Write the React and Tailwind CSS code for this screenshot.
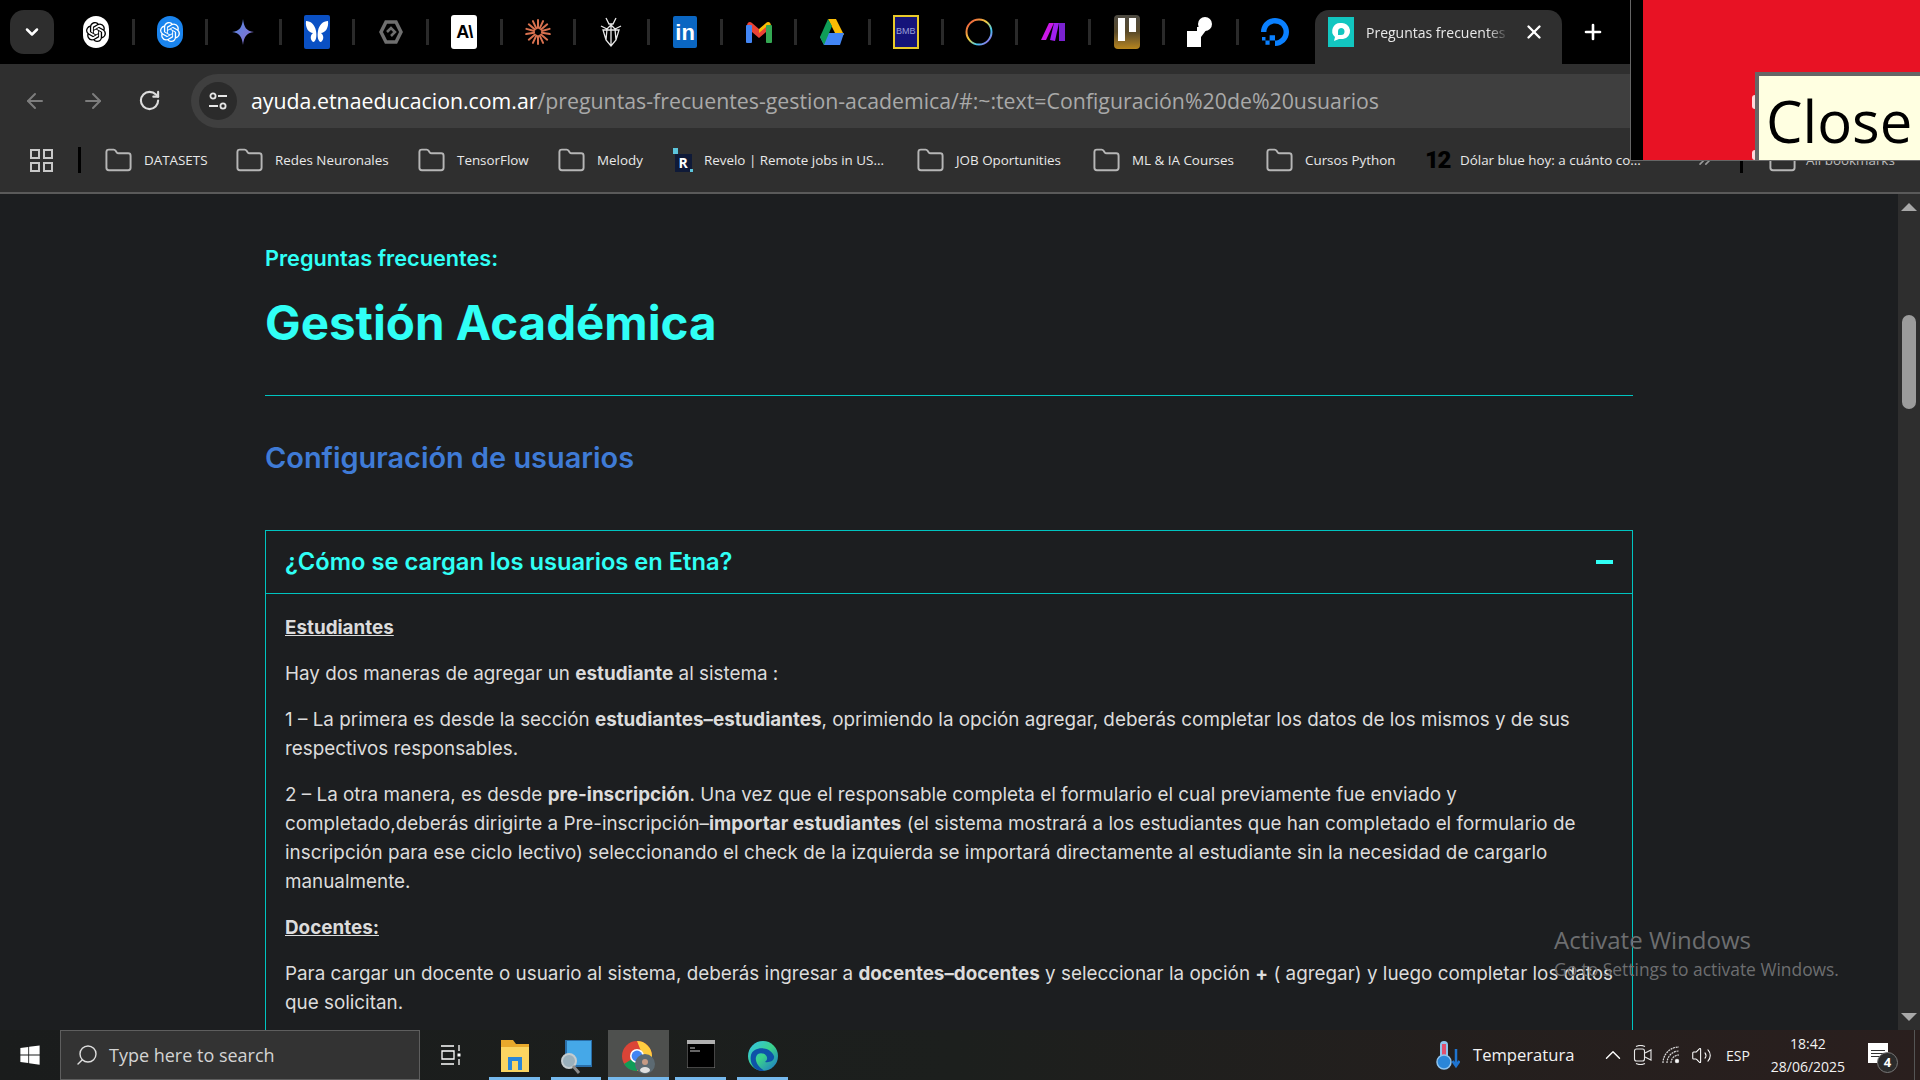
import React from 'react';
import { ArrowLeft, ArrowRight, RotateCw, Folder, Plus, X, ChevronDown, ChevronUp, Search, ZoomOut, ChevronsRight, Volume2 } from 'lucide-react';
import { SiOpenai, SiDigitalocean } from 'react-icons/si';
import { FaWindows } from 'react-icons/fa';

const Claude = () => (
  <svg width="26" height="26" viewBox="0 0 26 26" stroke="#d9714f" strokeWidth="2" strokeLinecap="round">
    {[0, 25, 50, 75, 100, 130, 155, 180, 205, 230, 260, 285, 310, 335].map((a) => (
      <line key={a} x1="13" y1="9" x2="13" y2="1" transform={`rotate(${a} 13 13)`} />
    ))}
  </svg>
);

const tabIcons = [
  <div className="w-[26px] h-[32px] rounded-full bg-white flex items-center justify-center text-black"><SiOpenai size={20} /></div>,
  <div className="w-[26px] h-[32px] rounded-full bg-[#1a84ee] flex items-center justify-center text-white"><SiOpenai size={20} /></div>,
  <svg width="24" height="28" viewBox="0 0 24 28"><defs><linearGradient id="gem" x1="0" y1="0" x2="1" y2="1"><stop offset="0" stopColor="#4f8ae8" /><stop offset="1" stopColor="#8f6cc8" /></linearGradient></defs><path d="M12 1C13 9 15 13 23 14 15 15 13 19 12 27 11 19 9 15 1 14 9 13 11 9 12 1Z" fill="url(#gem)" /></svg>,
  <svg width="26" height="34" viewBox="0 0 26 34"><rect width="26" height="34" rx="2" fill="#0a50c4" /><path d="M12 16C11 10 7 6 2 6 1 13 5 18 9 18 6 20 6 25 9 27 12 27 13 21 12 16ZM14 16C15 10 19 6 24 6 25 13 21 18 17 18 20 20 20 25 17 27 14 27 13 21 14 16Z" fill="#fff" /></svg>,
  <svg width="24" height="26" viewBox="0 0 24 26" fill="none" stroke="#6f6f6f" strokeWidth="3.5"><path d="M7 3H17L22 13 17 23H7L2 13Z" /><path d="M8 13 12 9 16 13 12 17" strokeWidth="2.5" /></svg>,
  <div className="w-[26px] h-[34px] rounded-[3px] bg-white flex items-center justify-center text-black font-bold text-[18px] tracking-[-1px] font-['Liberation_Sans',sans-serif]">A\</div>,
  <Claude />,
  <svg width="24" height="30" viewBox="0 0 22 30" fill="none" stroke="#e8e8e8" strokeWidth="1.3"><path d="M6 1 9 7H13L16 1M1 9 7 12 11 8 15 12 21 9M3 13H19L16 23 11 29 6 23ZM11 8V29M7 12 6 23M15 12 16 23" /></svg>,
  <div className="w-[24px] h-[32px] bg-[#0a66c2] flex items-center justify-center text-white font-bold text-[22px] font-['Liberation_Sans',sans-serif] rounded-[2px]">in</div>,
  <svg width="26" height="24" viewBox="0 0 26 24" fill="none"><path d="M1 6C1 2 4 1 6 3L13 9V14L1 5Z" fill="#ea4335" /><path d="M25 6C25 2 22 1 20 3L13 9V14L25 5Z" fill="#fbbc04" /><rect x="0" y="5" width="6" height="18" rx="1" fill="#4285f4" /><rect x="20" y="5" width="6" height="18" rx="1" fill="#34a853" /><path d="M6 7 13 13 20 7V12L13 18 6 12Z" fill="#ea4335" /></svg>,
  <svg width="26" height="28" viewBox="0 0 26 28"><path d="M9 1H17L25 17H17Z" fill="#fbbc04" /><path d="M5 27 1 19 9 15H25L21 27Z" fill="#4285f4" /><path d="M9 1 13 8 5 27 1 19Z" fill="#0f9d58" /></svg>,
  <div className="w-[26px] h-[34px] bg-[#14147a] border-2 border-[#e8c92a] flex items-center justify-center text-[#9aa0d8] text-[9px] font-['Liberation_Sans',sans-serif]">BMB</div>,
  <svg width="28" height="28" viewBox="0 0 28 28" fill="none"><defs><linearGradient id="ring" x1="0" y1="0" x2="1" y2="1"><stop offset="0" stopColor="#f0403c" /><stop offset=".45" stopColor="#f0d040" /><stop offset=".7" stopColor="#40c8f0" /><stop offset="1" stopColor="#c040e0" /></linearGradient></defs><circle cx="14" cy="14" r="12.5" stroke="url(#ring)" strokeWidth="2" /></svg>,
  <svg width="26" height="22" viewBox="0 0 26 22"><path d="M1 19 9 2H14L6 19Z" fill="#cc18e8" /><path d="M10 19 14 2H19L15 20Z" fill="#a020f0" /><path d="M19 20V2H25V20Z" fill="#7a22d0" /></svg>,
  <div className="w-[26px] h-[34px] rounded-[4px] bg-gradient-to-b from-[#4d4a42] via-[#5a4a28] to-[#b8861a] flex gap-[4px] justify-center pt-[3px]"><div className="w-[7px] h-[23px] bg-white" /><div className="w-[7px] h-[14px] bg-white" /></div>,
  <svg width="26" height="30" viewBox="0 0 26 30" fill="#fff"><path d="M0 14H10V10H14V30H0Z" /><circle cx="18" cy="7" r="7" /><path d="M10 14 16 8 20 12 14 20Z" /></svg>,
  <SiDigitalocean size={28} color="#0a80ff" />,
];

const bookmarks = [
  { label: 'DATASETS', w: 'w-[63px]' },
  { label: 'Redes Neuronales', w: 'w-[114px]' },
  { label: 'TensorFlow', w: 'w-[72px]' },
  { label: 'Melody', w: 'w-[48px]' },
  { label: 'Revelo | Remote jobs in US...', w: 'w-[184px]', icon: 'revelo' },
  { label: 'JOB Oportunities', w: 'w-[108px]' },
  { label: 'ML & IA Courses', w: 'w-[105px]' },
  { label: 'Cursos Python', w: 'w-[90px]' },
  { label: 'Dólar blue hoy: a cuánto co...', w: 'w-[185px]', icon: 'twelve' },
];

function BookmarkIcon({ type }) {
  if (type === 'revelo') {
    return (
      <div className="relative w-[20px] h-[24px] mr-[11px] -ml-[2px] flex items-end justify-center">
        <div className="absolute left-0 top-0 w-[5px] h-[6px] bg-[#5cc5dc]" />
        <div className="absolute right-0 bottom-0 w-[3px] h-[3px] bg-[#5cc5dc]" />
        <div className="w-[17px] h-[18px] bg-[#0f1a38] text-white font-bold text-[14px] leading-[18px] text-center">R</div>
      </div>
    );
  }
  if (type === 'twelve') {
    return <div className="w-[25px] mr-[10px] text-black font-black text-[24px] leading-none tracking-[-1.5px] font-['Roboto',sans-serif]">12</div>;
  }
  return <Folder size={29} strokeWidth={1.6} className="text-[#b6b6b6] mr-[11px] -ml-[2px]" />;
}

const TabStrip = () => (
  <div className="h-16 bg-black flex items-start pl-[10px]">
    <div className="w-[44px] h-[44px] mt-[10px] rounded-[14px] bg-[#2e2e2e] flex items-center justify-center">
      <ChevronDown size={20} strokeWidth={3} className="text-white" />
    </div>
    <div className="flex ml-[7px] h-[64px] w-[1254px]">
      {tabIcons.map((icon, i) => (
        <div key={i} className="w-[73.6px] h-[64px] flex items-center">
          <div className="flex-1 flex items-center justify-center">{icon}</div>
          {i < tabIcons.length - 1 && <div className="w-[3px] h-[26px] bg-[#2a2a2a]" />}
        </div>
      ))}
    </div>
    <div className="w-[247px] h-[54px] mt-[10px] pb-[10px] bg-[#2f2f2f] rounded-t-[14px] flex items-center pl-[13px]">
      <svg width="26" height="30" viewBox="0 0 26 30"><rect width="26" height="30" fill="#12c6c0" /><path d="M13 6A8 8 0 0 0 7 20L6 24 11 22H15A8 8 0 0 0 13 6ZM13 11A3.5 3.5 0 0 1 13 18H10V14.5A3.5 3.5 0 0 1 13 11Z" fill="#fff" fillRule="evenodd" /></svg>
      <div className="ml-[12px] w-[143px] overflow-hidden whitespace-nowrap text-[14px] text-[#e8e8e8] font-['Open_Sans',sans-serif] [mask-image:linear-gradient(to_right,black_85%,transparent)]">Preguntas frecuentes Gestión</div>
      <X size={22} strokeWidth={2.6} className="text-white ml-[14px]" />
    </div>
    <Plus size={24} strokeWidth={2.6} className="text-white ml-[19px] mt-[20px]" />
  </div>
);

const Toolbar = () => (
  <div className="h-16 bg-[#2f2f2f] flex items-start pt-[10px] pl-[23px]">
    <ArrowLeft size={24} className="text-[#7d7d7d] mt-[15px]" />
    <ArrowRight size={24} className="text-[#7d7d7d] mt-[15px] ml-[34px]" />
    <RotateCw size={23} strokeWidth={2.2} className="text-[#dcdcdc] mt-[15px] ml-[33px]" />
    <div className="ml-[30px] flex-1 h-[54px] bg-[#3f3f3f] rounded-l-[27px] flex items-center pl-2">
      <div className="w-[38px] h-[38px] rounded-full bg-[#2b2b2b] flex items-center justify-center">
        <svg width="20" height="20" viewBox="0 0 20 20" fill="none" stroke="#e6e6e6" strokeWidth="1.8"><circle cx="5" cy="5" r="2.6" /><path d="M10 5H19M1 15H10" /><circle cx="15" cy="15" r="2.6" /></svg>
      </div>
      <div className="ml-[14px] text-[21.3px] text-[#a9a9a9] whitespace-nowrap font-['Open_Sans',sans-serif]"><span className="text-white">ayuda.etnaeducacion.com.ar</span>/preguntas-frecuentes-gestion-academica/#:~:text=Configuración%20de%20usuarios</div>
      <ZoomOut size={26} strokeWidth={2} className="text-[#b5b5b5] ml-auto mr-[8px] mt-[-2px]" />
    </div>
  </div>
);

const BookmarksBar = () => (
  <div className="h-16 bg-[#2f2f2f] flex items-center font-['Open_Sans',sans-serif] text-[13.4px] text-[#e9e9e9] whitespace-nowrap relative pl-[30px]">
    <div className="grid grid-cols-2 gap-[3px] w-[23px] mr-[25px]">
      {[0, 1, 2, 3].map((n) => <div key={n} className="w-[10px] h-[10px] border-[2px] border-[#c8c8c8]" />)}
    </div>
    <div className="w-[3px] h-[26px] bg-black mr-[25px]" />
    <div className="flex items-center gap-[30px]">
      {bookmarks.map((b) => (
        <div key={b.label} className="flex items-center">
          <BookmarkIcon type={b.icon} />
          <div className={b.w}>{b.label}</div>
        </div>
      ))}
    </div>
    <ChevronsRight size={20} className="text-[#9a9a9a] ml-[50px]" />
    <div className="w-[3px] h-[26px] bg-black ml-[25px]" />
    <Folder size={29} strokeWidth={1.6} className="text-[#b6b6b6] ml-[25px] mr-[9px]" />
    <div className="text-[#bdbdbd]">All bookmarks</div>
  </div>
);

const Scrollbar = () => (
  <div className="w-[22px] bg-[#2e2e2e] flex flex-col items-center shrink-0">
    <div className="mt-[9px] w-0 h-0 border-x-[8px] border-x-transparent border-b-[8px] border-b-[#a8a8a8]" />
    <div className="mt-[104px] w-[14px] h-[94px] rounded-full bg-[#9c9c9c]" />
    <div className="mt-auto mb-[9px] w-0 h-0 border-x-[8px] border-x-transparent border-t-[8px] border-t-[#a8a8a8]" />
  </div>
);

const Article = () => (
  <div className="flex-1 overflow-hidden pl-[265px] font-['Inter',sans-serif]">
    <div className="w-[1368px]">
      <div className="mt-[49px] h-[30px] leading-[30px] text-[21.7px] font-semibold text-[#30fff5]">Preguntas frecuentes:</div>
      <h1 className="mt-[20px] h-[60px] leading-[60px] text-[47.5px] font-bold text-[#30fff5]">Gestión Académica</h1>
      <div className="mt-[42px] h-px bg-[#00c4c0]" />
      <h2 className="mt-[42px] h-[40px] leading-[40px] text-[28.9px] font-semibold text-[#3f7bd6]">Configuración de usuarios</h2>
      <div className="mt-[52px] border border-[#00c4c0]">
        <div className="h-[63px] border-b border-[#00c4c0] flex items-center justify-between pl-[19px] pr-[19px]">
          <div className="text-[23.7px] font-semibold text-[#30fff5]">¿Cómo se cargan los usuarios en Etna?</div>
          <div className="w-[17px] h-[4px] bg-[#30fff5]" />
        </div>
        <div className="pt-[19px] pb-[60px] px-[19px] text-[18.85px] leading-[29px] text-[#dcdcdc] space-y-[17px] whitespace-nowrap">
          <p className="font-bold underline">Estudiantes</p>
          <p>Hay dos maneras de agregar un <b>estudiante</b> al sistema :</p>
          <p>1 – La primera es desde la sección <b>estudiantes–estudiantes</b>, oprimiendo la opción agregar, deberás completar los datos de los mismos y de sus<br />respectivos responsables.</p>
          <p>2 – La otra manera, es desde <b>pre-inscripción</b>. Una vez que el responsable completa el formulario el cual previamente fue enviado y<br />completado,deberás dirigirte a Pre-inscripción–<b>importar estudiantes</b> (el sistema mostrará a los estudiantes que han completado el formulario de<br />inscripción para ese ciclo lectivo) seleccionando el check de la izquierda se importará directamente al estudiante sin la necesidad de cargarlo<br />manualmente.</p>
          <p className="font-bold underline">Docentes:</p>
          <p>Para cargar un docente o usuario al sistema, deberás ingresar a <b>docentes–docentes</b> y seleccionar la opción <b>+</b> ( agregar) y luego completar los datos<br />que solicitan.</p>
        </div>
      </div>
    </div>
  </div>
);

const Taskbar = () => (
  <div className="h-[50px] bg-gradient-to-r from-[#1a1c1c] via-[#1c1f1d] to-[#2a1f1e] flex items-center text-white relative shrink-0 font-['Open_Sans',sans-serif]">
    <div className="w-[60px] flex justify-center"><FaWindows size={22} /></div>
    <div className="w-[360px] h-[50px] bg-[#333333] border border-[#5e5e5e] flex items-center pl-[14px]">
      <Search size={24} strokeWidth={1.4} className="text-[#dedede] -scale-x-100" />
      <span className="ml-[10px] text-[18px] text-[#d4d4d4]">Type here to search</span>
    </div>
    <svg className="ml-[21px]" width="20" height="20" viewBox="0 0 20 20" fill="none" stroke="#fff" strokeWidth="1.3"><path d="M0 1H13M0 19H13M1 6H13V14H1ZM18 0V6M18 14V20" /><path d="M18 8.5V11.5" strokeWidth="3" /></svg>
    <div className="absolute left-[489px] top-0 flex h-[50px]">
      {/* pinned apps */}
      <div className="w-[51px] mr-[11px] relative flex justify-center pt-[10px]">
        <svg width="28" height="32" viewBox="0 0 28 32"><path d="M0 0H12L15 4H28V30H0Z" fill="#e8a92c" /><path d="M0 7H28V32H0Z" fill="#fbd561" /><path d="M7 17H21V30H17V21H11V30H7Z" fill="#2a86d8" /></svg>
        <div className="absolute bottom-0 inset-x-0 h-[3px] bg-[#76b9ed]" />
      </div>
      <div className="w-[50px] mr-[7px] relative flex justify-center pt-[10px]">
        <svg width="32" height="34" viewBox="0 0 32 34"><rect x="6" y="0" width="26" height="26" fill="#45a8e8" stroke="#2a6ea8" strokeWidth="2" /><circle cx="9" cy="21" r="7" fill="#9ab0bc" stroke="#c4ccd0" strokeWidth="2" /><path d="M13 26 19 33" stroke="#8a8a8a" strokeWidth="3" /></svg>
        <div className="absolute bottom-0 inset-x-0 h-[3px] bg-[#76b9ed]" />
      </div>
      <div className="w-[61px] mr-[6px] relative flex justify-center pt-[9px] bg-[#4e504e]">
        <svg width="34" height="36" viewBox="0 0 34 36"><circle cx="15" cy="17" r="15" fill="#db4437" /><path d="M15 17 2 25A15 15 0 0 0 15 32Z" fill="#0f9d58" /><path d="M15 2A15 15 0 0 1 30 17 15 15 0 0 1 15 32L22 20Z" fill="#ffcd40" /><circle cx="15" cy="17" r="7" fill="#fff" /><circle cx="15" cy="17" r="5.4" fill="#4285f4" /><circle cx="23" cy="25" r="10" fill="#5c6a72" /><circle cx="23" cy="23" r="3" fill="#c59a84" /><ellipse cx="23" cy="31" rx="5" ry="3" fill="#e0e0e0" /></svg>
        <div className="absolute bottom-0 inset-x-0 h-[3px] bg-[#76b9ed]" />
      </div>
      <div className="w-[51px] mr-[11px] relative flex justify-center pt-[10px]">
        <svg width="28" height="28" viewBox="0 0 28 28"><rect width="28" height="28" fill="#000" stroke="#8a8a8a" /><rect width="28" height="4" fill="#b0b0b0" /><path d="M3 8H8M3 11H13" stroke="#ccc" /></svg>
        <div className="absolute bottom-0 inset-x-0 h-[3px] bg-[#76b9ed]" />
      </div>
      <div className="w-[51px] relative flex justify-center pt-[9px]">
        <svg width="32" height="36" viewBox="0 0 32 36"><defs><linearGradient id="edge" x1="0" y1="0" x2="1" y2="1"><stop offset="0" stopColor="#35c1f1" /><stop offset=".5" stopColor="#3ad28a" /><stop offset="1" stopColor="#1b6fd0" /></linearGradient></defs><circle cx="16" cy="17" r="15" fill="url(#edge)" /><path d="M4 16C6 8 22 6 27 17 28 22 22 24 18 23 24 18 16 12 11 15 6 19 10 28 18 32 8 33 2 25 4 16Z" fill="#0e52a8" /></svg>
        <div className="absolute bottom-0 inset-x-0 h-[3px] bg-[#76b9ed]" />
      </div>
    </div>
    <div className="ml-auto flex items-center h-[50px] relative w-[482px]">
      <svg className="-ml-[2px]" width="24" height="30" viewBox="0 0 24 30"><rect x="4" y="1" width="8" height="20" rx="4" fill="#8fc4ee" /><rect x="6" y="4" width="4" height="14" fill="#e0506e" /><circle cx="8" cy="22" r="7" fill="#2a86d8" stroke="#8fc4ee" strokeWidth="1.5" /><path d="M20 9V24M16.5 21 20 26 23.5 21" stroke="#1e74d0" strokeWidth="2.5" fill="none" /></svg>
      <span className="ml-[13px] text-[16.6px] text-[#f2f2f2] w-[100px]">Temperatura</span>
      <ChevronUp size={26} strokeWidth={1.3} className="ml-[27px]" />
      <svg className="ml-[7px]" width="20" height="20" viewBox="0 0 20 20" fill="none" stroke="#e8e8e8" strokeWidth="1.1"><rect x="1.5" y="4" width="10" height="12" rx="2" /><path d="M12 8 18 5V15L12 12M3 1.5C6 0 9 0 12 1.5M3 18.5C6 20 9 20 12 18.5" /></svg>
      <svg className="ml-[9px]" width="18" height="18" viewBox="0 0 18 18" fill="none" stroke="#dcdcdc" strokeWidth="1.2" strokeDasharray="2 .7"><path d="M1 17A16 16 0 0 1 17 1M5 17A12 12 0 0 1 17 5M9 17A8 8 0 0 1 17 9" /><circle cx="15" cy="15" r="1.6" fill="#fff" strokeDasharray="0" /></svg>
      <Volume2 size={21} strokeWidth={1.2} className="ml-[11px]" />
      <span className="ml-[14px] text-[14px] text-[#f2f2f2]">ESP</span>
      <div className="ml-[19px] w-[78px] text-center text-[14px] leading-[23px] text-[#f2f2f2]"><div>18:42</div><div className="whitespace-nowrap">28/06/2025</div></div>
      <div className="ml-[21px] relative w-[20px] h-[20px] bg-white flex flex-col gap-[2px] justify-center px-[3px] -mt-[4px]">
        <div className="h-px bg-[#333]" /><div className="h-px bg-[#333]" /><div className="h-px bg-[#333]" />
        <div className="absolute -right-[10px] -bottom-[10px] w-[21px] h-[21px] rounded-full bg-[#2b2b2b] border border-[#777] text-white text-[13px] font-bold leading-[19px] text-center">4</div>
      </div>
    </div>
    <div className="absolute right-[5px] top-0 w-px h-[50px] bg-[#555]" />
  </div>
);

export default function App() {
  return (
    <div className="relative w-[1920px] h-[1080px] overflow-hidden flex flex-col bg-[#1c1e20]">
      <TabStrip />
      <Toolbar />
      <BookmarksBar />
      <div className="h-[2px] bg-[#5a5a5a] shrink-0" />
      <div className="flex-1 flex min-h-0">
        <Article />
        <Scrollbar />
      </div>
      <Taskbar />

      {/* red window that lies over the browser */}
      <div className="absolute top-0 right-0 w-[290px] h-[161px] bg-black border-l border-b border-[#666] pl-[12px]">
        <div className="relative h-full bg-[#e81224] flex justify-end items-end">
          <div className="absolute left-[109px] top-[95px] w-[3px] h-[14px] bg-[#ffd8dc] rounded-l-full" />
          <div className="absolute left-[109px] top-[150px] w-[3px] h-[10px] bg-[#ffd8dc] rounded-l-full" />
          <div className="w-[165px] h-[88px] bg-[#ffffe1] border-[4px] border-b-0 border-r-0 border-[#666] pl-[7px] text-[58px] leading-[90px] text-black font-['Open_Sans',sans-serif] overflow-hidden">Close</div>
        </div>
      </div>

      {/* windows watermark */}
      <div className="absolute left-[1554px] top-[924px] text-[#6d6e70] font-['Open_Sans',sans-serif] pointer-events-none">
        <div className="text-[24px] leading-[32px]">Activate Windows</div>
        <div className="text-[17.4px] leading-[27px] whitespace-nowrap">Go to Settings to activate Windows.</div>
      </div>
    </div>
  );
}
